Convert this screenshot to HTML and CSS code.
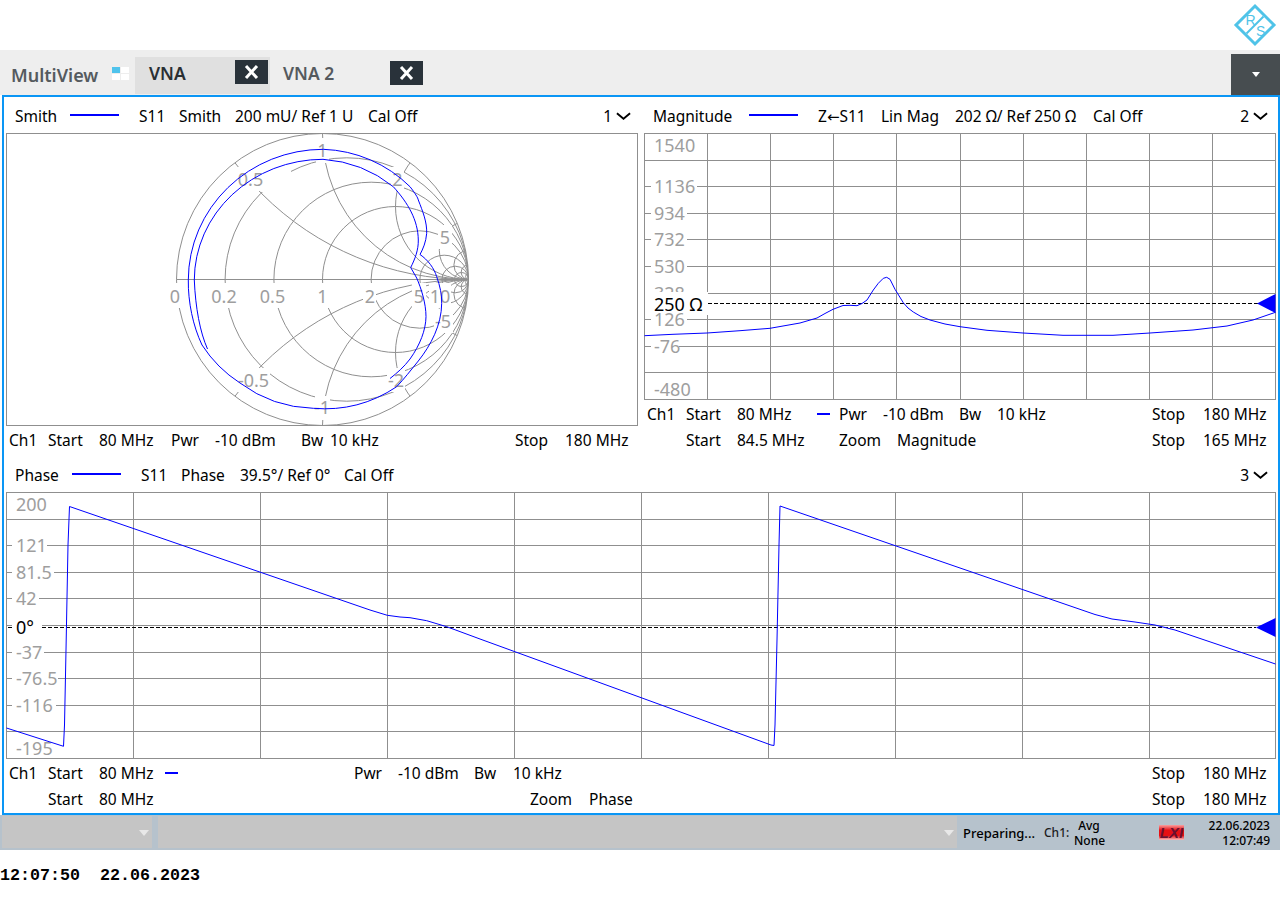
FILE: index.html
```html
<!DOCTYPE html>
<html lang="en">
<head>
    <meta charset="UTF-8">
    <title>VNA MultiView</title>
    <link rel="stylesheet" href="styles.css">
</head>
<body>

    <div class="logo-bar">
        <svg class="logo" viewBox="0 0 46 46" width="46" height="46">
            <path class="logo-line" d="M23 4L42 23L23 42L4 23Z"/>
            <path class="logo-line thin" d="M31.5 14.5L14.5 31.5"/>
            <text class="logo-text" x="13.5" y="23">R</text>
            <text class="logo-text" x="24" y="34">S</text>
        </svg>
    </div>

    <div class="tab-bar">
        <span class="tab-title">MultiView</span>
        <span class="tab-icon"><i class="on"></i><i></i><i></i><i></i></span>
        <div class="tab tab-active">
            <span class="tab-name">VNA</span>
            <button class="tab-close"><svg viewBox="0 0 33 24"><path d="M11 6L22 18M22 6L11 18"/></svg></button>
        </div>
        <div class="tab tab-second">
            <span class="tab-name">VNA 2</span>
            <button class="tab-close"><svg viewBox="0 0 33 24"><path d="M11 6L22 18M22 6L11 18"/></svg></button>
        </div>
        <div class="tab-menu"><span class="tab-menu-arrow"></span></div>
    </div>

    <div class="frame">
        <div class="top-row">

            <!-- Smith chart -->
            <div class="panel panel-left">
                <div class="head head-smith">
                    <span>Smith</span><span class="legend"></span><span>S11</span><span>Smith</span><span>200 mU/ Ref 1 U</span><span>Cal Off</span>
                    <span class="head-num">1<svg class="chevron" viewBox="0 0 16 10"><path d="M1 2L8 8L15 2"/></svg></span>
                </div>
                <svg class="plot" width="632" height="293" viewBox="6 133 632 293">
                    <defs><clipPath id="unit"><circle cx="322.5" cy="279.5" r="146"/></clipPath></defs>
                    <rect class="grid" x="6.5" y="133.5" width="631" height="292"/>
                    <g class="grid" clip-path="url(#unit)">
                        <circle cx="346.8" cy="279.5" r="121.7"/>
                        <circle cx="371.2" cy="279.5" r="97.3"/>
                        <circle cx="395.5" cy="279.5" r="73"/>
                        <circle cx="419.8" cy="279.5" r="48.7"/>
                        <circle cx="444.2" cy="279.5" r="24.3"/>
                        <circle cx="455.2" cy="279.5" r="13.3"/>
                        <circle cx="461.5" cy="279.5" r="7"/>
                        <circle cx="468.5" cy="-12.5" r="292"/>
                        <circle cx="468.5" cy="571.5" r="292"/>
                        <circle cx="468.5" cy="133.5" r="146"/>
                        <circle cx="468.5" cy="425.5" r="146"/>
                        <circle cx="468.5" cy="206.5" r="73"/>
                        <circle cx="468.5" cy="352.5" r="73"/>
                        <circle cx="468.5" cy="250.3" r="29.2"/>
                        <circle cx="468.5" cy="308.7" r="29.2"/>
                        <circle cx="468.5" cy="264.9" r="14.6"/>
                        <circle cx="468.5" cy="294.1" r="14.6"/>
                        <circle cx="468.5" cy="272.2" r="7.3"/>
                        <circle cx="468.5" cy="286.8" r="7.3"/>
                        <circle cx="468.5" cy="276.6" r="2.9"/>
                        <circle cx="468.5" cy="282.4" r="2.9"/>
                    </g>
                    <circle class="grid" cx="322.5" cy="279.5" r="146"/>
                    <path class="grid" d="M176.5 279.5H468.5"/>
                    <g class="mask">
                        <rect x="316" y="138" width="13" height="25"/>
                        <rect x="237" y="167" width="27" height="24"/>
                        <rect x="262" y="166" width="29" height="26"/>
                        <rect x="391" y="167" width="13" height="24"/>
                        <rect x="438" y="225" width="14" height="24"/>
                        <rect x="168" y="283" width="14" height="25"/>
                        <rect x="210" y="283" width="28" height="25"/>
                        <rect x="259" y="283" width="28" height="25"/>
                        <rect x="316" y="283" width="13" height="25"/>
                        <rect x="363" y="283" width="13" height="25"/>
                        <rect x="412" y="283" width="14" height="25"/>
                        <rect x="429" y="283" width="22" height="25"/>
                        <rect x="434" y="309" width="19" height="24"/>
                        <rect x="238" y="368" width="32" height="24"/>
                        <rect x="387" y="368" width="18" height="24"/>
                        <rect x="315" y="396" width="15" height="24"/>
                    </g>
                    <g class="axis-label mid">
                        <text x="322.5" y="156.5">1</text>
                        <text x="250.5" y="185.5">0.5</text>
                        <text x="397.5" y="185.5">2</text>
                        <text x="445" y="243.5">5</text>
                        <text x="175" y="302.5">0</text>
                        <text x="224" y="302.5">0.2</text>
                        <text x="272.5" y="302.5">0.5</text>
                        <text x="322.5" y="302.5">1</text>
                        <text x="370" y="302.5">2</text>
                        <text x="419" y="302.5">5</text>
                        <text x="440" y="302.5">10</text>
                        <text x="443" y="327.5">-5</text>
                        <text x="253.5" y="386.5">-0.5</text>
                        <text x="396" y="386.5">-2</text>
                        <text x="322" y="414">-1</text>
                    </g>
                    <path class="trace" d="M207.5 349C200 332 195.5 308 194.3 280A129 121 0 0 1 323 159.3A122 116 0 0 1 393.3 186.7C408 203 418 220 418.3 240C418.5 250 415 259 410.7 267.5L416.7 278C421 288 426 303 426 316.7C425.8 330 420 345 410 359C404 367 397 373 390 378.5"/>
                    <path class="trace" d="M420 254.5C428 260 434 268 436.7 276.7C440 286 442 295 441.7 303.3C441.5 325 431 345 418.3 361C411 370 404 379 396.7 386.7A130 130 0 0 1 313.3 408.3A128 128 0 0 1 240 383A128 128 0 0 1 202 345C193 326 188 302 188.3 280A135 131 0 0 1 323.3 149.3A128 125 0 0 1 410 186.7C415 193 418 198 418.3 200C423 212 427 222 426.7 233.3C426 242 423 249 420 254.5Z"/>
                </svg>
                <div class="info info-a">
                    <span>Ch1</span><span>Start</span><span>80 MHz</span><span>Pwr</span><span>-10 dBm</span><span>Bw</span><span>10 kHz</span><span>Stop</span><span>180 MHz</span>
                </div>
            </div>

            <!-- Magnitude -->
            <div class="panel panel-right">
                <div class="head head-mag">
                    <span>Magnitude</span><span class="legend"></span><span>Z<i class="arrow">←</i>S11</span><span>Lin Mag</span><span>202 Ω/ Ref 250 Ω</span><span>Cal Off</span>
                    <span class="head-num">2<svg class="chevron" viewBox="0 0 16 10"><path d="M1 2L8 8L15 2"/></svg></span>
                </div>
                <svg class="plot" width="632" height="267" viewBox="644 133 632 267">
                    <rect class="grid" x="644.5" y="133.5" width="631" height="266"/>
                    <path class="grid" d="M707.5 133V400M770.5 133V400M833.5 133V400M896.5 133V400M960.5 133V400M1023.5 133V400M1086.5 133V400M1149.5 133V400M1212.5 133V400M644 160.5H1276M644 186.5H1276M644 213.5H1276M644 239.5H1276M644 266.5H1276M644 293.5H1276M644 319.5H1276M644 346.5H1276M644 372.5H1276"/>
                    <g class="mask">
                        <rect x="651" y="135" width="46" height="22"/>
                        <rect x="651" y="176" width="46" height="22"/>
                        <rect x="651" y="203" width="36" height="22"/>
                        <rect x="651" y="229" width="36" height="22"/>
                        <rect x="651" y="256" width="36" height="22"/>
                        <rect x="651" y="309" width="36" height="21"/>
                        <rect x="651" y="336" width="28" height="22"/>
                        <rect x="651" y="378" width="44" height="20"/>
                    </g>
                    <g class="axis-label">
                        <text x="654" y="152">1540</text>
                        <text x="654" y="193">1136</text>
                        <text x="654" y="220">934</text>
                        <text x="654" y="246">732</text>
                        <text x="654" y="273">530</text>
                        <text x="654" y="300">328</text>
                    </g>
                    <rect class="mask" x="645" y="292" width="63" height="23"/>
                    <g class="axis-label">
                        <text x="654" y="326">126</text>
                        <text x="654" y="353">-76</text>
                        <text x="654" y="395.5">-480</text>
                    </g>
                    <text class="axis-ref" x="654" y="311">250 Ω</text>
                    <path class="dash" d="M708 303.5H1258"/>
                    <path class="trace" d="M644.5 335.7L673 334.3L707 333L740 330.7L770 328.3L800 323L817 318L825 313.5L833 309.3L843 305.5L850 305.3L857 305.7L862 303.5L867 300L873.3 290L878.3 283.3L883.3 278.3L886.7 277.3L890 279.3L895 289.3L903.3 302.7L908 308L913.3 312L921 316.5L930 320L945 324L960 326.7L987 330.3L1023 333L1063 335.3L1113 335.3L1150 333L1193 330L1227 326L1253 320L1275.5 312.3"/>
                    <path class="marker" d="M1257 303.5L1275.5 294V313Z"/>
                </svg>
                <div class="info info-b">
                    <span>Ch1</span><span>Start</span><span>80 MHz</span><span class="dash-cell"><i class="legend-short"></i></span><span>Pwr</span><span>-10 dBm</span><span>Bw</span><span>10 kHz</span><span>Stop</span><span>180 MHz</span>
                </div>
                <div class="info info-b2">
                    <span></span><span>Start</span><span>84.5 MHz</span><span>Zoom</span><span>Magnitude</span><span>Stop</span><span>165 MHz</span>
                </div>
            </div>
        </div>

        <!-- Phase -->
        <div class="panel panel-bottom">
            <div class="head head-phase">
                <span>Phase</span><span class="legend"></span><span>S11</span><span>Phase</span><span>39.5°/ Ref 0°</span><span>Cal Off</span>
                <span class="head-num">3<svg class="chevron" viewBox="0 0 16 10"><path d="M1 2L8 8L15 2"/></svg></span>
            </div>
            <svg class="plot" width="1270" height="267" viewBox="6 492 1270 267">
                <rect class="grid" x="6.5" y="492.5" width="1269" height="266"/>
                <path class="grid" d="M133.5 492V759M260.5 492V759M387.5 492V759M514.5 492V759M641.5 492V759M768.5 492V759M895.5 492V759M1022.5 492V759M1149.5 492V759M6 519.5H1276M6 545.5H1276M6 572.5H1276M6 598.5H1276M6 625.5H1276M6 652.5H1276M6 678.5H1276M6 705.5H1276M6 731.5H1276"/>
                <g class="mask">
                    <rect x="13" y="494" width="38" height="21"/>
                    <rect x="12" y="535" width="35" height="21"/>
                    <rect x="12" y="562" width="42" height="21"/>
                    <rect x="12" y="588" width="27" height="21"/>
                    <rect x="12" y="615" width="30" height="23"/>
                    <rect x="12" y="642" width="32" height="21"/>
                    <rect x="12" y="668" width="46" height="21"/>
                    <rect x="12" y="695" width="44" height="21"/>
                    <rect x="13" y="736" width="42" height="21"/>
                </g>
                <g class="axis-label">
                    <text x="16" y="511">200</text>
                    <text x="16" y="552">121</text>
                    <text x="16" y="579">81.5</text>
                    <text x="16" y="605">42</text>
                    <text x="16" y="659">-37</text>
                    <text x="16" y="685">-76.5</text>
                    <text x="16" y="712">-116</text>
                    <text x="16" y="755">-195</text>
                </g>
                <text class="axis-ref" x="16" y="634">0°</text>
                <path class="dash" d="M8 627.5H14M42 627.5H1256"/>
                <path class="trace" d="M6.5 728L63.5 746.3L64.5 725L66 650L68 545L69.5 506.5L370 610L387.3 615.3L400 617L410 617.7L426.7 620.7L446.7 626.7L480 639L771 745L774 745.5L775 725L777 640L779 545L780 506L1095 614.5L1112 619L1135 622L1155 625L1175 630L1275.5 664"/>
                <path class="marker" d="M1256 627.5L1275.5 618V637Z"/>
            </svg>
            <div class="info info-c">
                <span>Ch1</span><span>Start</span><span>80 MHz</span><span class="dash-cell"><i class="legend-short"></i></span><span>Pwr</span><span>-10 dBm</span><span>Bw</span><span>10 kHz</span><span>Stop</span><span>180 MHz</span>
            </div>
            <div class="info info-c2">
                <span></span><span>Start</span><span>80 MHz</span><span>Zoom</span><span>Phase</span><span>Stop</span><span>180 MHz</span>
            </div>
        </div>
    </div>

    <div class="status-bar">
        <div class="status-seg seg-small"><span class="seg-arrow"></span></div>
        <div class="status-seg seg-big"><span class="seg-arrow"></span></div>
        <span class="status-msg">Preparing...</span>
        <span class="status-ch">Ch1:</span>
        <span class="status-avg">Avg<br>None</span>
        <span class="lxi">LXI</span>
        <span class="status-time">22.06.2023<br>12:07:49</span>
    </div>

    <p class="stamp">12:07:50&nbsp;&nbsp;22.06.2023</p>

</body>
</html>
```

FILE: styles.css
```css
body {
    margin: 0;
    width: 1280px;
    height: 900px;
    overflow: hidden;
    background-color: #ffffff;
    font-family: "Noto Sans", Arial, sans-serif;
    color: #000000;
}

/* logo */
.logo-bar {
    height: 50px;
    display: flex;
    justify-content: flex-end;
    align-items: center;
    padding-right: 2px;
}
.logo-line {
    fill: none;
    stroke: #4fc3e8;
    stroke-width: 3;
}
.logo-line.thin {
    stroke-width: 2;
}
.logo-text {
    font-family: "Liberation Sans", sans-serif;
    font-size: 14px;
    fill: #4fc3e8;
}

/* tabs */
.tab-bar {
    height: 45px;
    background-color: #eeeeee;
    display: flex;
}
.tab-title {
    margin: 15px 0 0 11px;
    width: 101px;
    font-size: 18px;
    font-weight: 600;
    color: #555a5e;
    line-height: 21px;
}
.tab-icon {
    display: grid;
    grid-template-columns: 8px 8px;
    grid-template-rows: 6px 6px;
    gap: 1px;
    width: 17px;
    height: 13px;
    margin: 17px 6px 0 0;
}
.tab-icon i {
    background-color: #ffffff;
}
.tab-icon i.on {
    background-color: #4fc3ec;
}
.tab {
    display: flex;
    align-items: flex-start;
}
.tab-active {
    width: 135px;
    height: 37px;
    margin-top: 7px;
    background-color: #e0e0e0;
    position: relative;
}
.tab-active .tab-name {
    margin: 5px 0 0 14px;
    color: #2a2f33;
}
.tab-active .tab-close {
    position: absolute;
    left: 100px;
    top: 3px;
}
.tab-second {
    margin-left: 13px;
    width: 140px;
    padding-top: 11px;
}
.tab-second .tab-name {
    color: #555a5e;
    width: 107px;
    margin-top: 1px;
}
.tab-name {
    font-size: 17.5px;
    font-weight: 600;
    line-height: 23px;
}
.tab-close {
    width: 33px;
    height: 24px;
    padding: 0;
    border: none;
    background-color: #29323a;
}
.tab-close svg {
    display: block;
    width: 33px;
    height: 24px;
}
.tab-close path {
    fill: none;
    stroke: #ffffff;
    stroke-width: 3;
}
.tab-menu {
    margin-left: auto;
    margin-top: 4px;
    width: 49px;
    height: 41px;
    background-color: #474d50;
    display: flex;
    justify-content: center;
    align-items: center;
}
.tab-menu-arrow {
    width: 0;
    height: 0;
    border-left: 4px solid transparent;
    border-right: 4px solid transparent;
    border-top: 5px solid #ffffff;
}

/* measurement frame */
.frame {
    height: 716px;
    margin-left: 2px;
    border: 2px solid #0a96f5;
}
.top-row {
    display: flex;
}
.panel-left {
    width: 636px;
    padding-left: 2px;
    box-sizing: border-box;
}
.panel-right {
    width: 638px;
    padding-left: 4px;
    box-sizing: border-box;
}
.panel-bottom {
    padding-left: 2px;
}
.plot {
    display: block;
}

.head {
    height: 36px;
    display: flex;
    align-items: center;
    font-size: 15.5px;
    line-height: 20px;
    padding-top: 2px;
    box-sizing: border-box;
}
.head-smith {
    padding-left: 9px;
    width: 625px;
}
.head-mag {
    padding-left: 9px;
    width: 624px;
}
.head-phase {
    height: 39px;
    padding-top: 5px;
    padding-left: 9px;
    width: 1262px;
}
.arrow {
    font-family: "DejaVu Sans", sans-serif;
    font-style: normal;
    font-size: 15px;
}
.legend {
    width: 49px;
    height: 2px;
    margin-top: -2px;
    background-color: #0000ff;
}
.head-smith span:nth-child(1) { width: 55px; }
.head-smith span:nth-child(2) { margin-right: 20px; }
.head-smith span:nth-child(3) { width: 40px; }
.head-smith span:nth-child(4) { width: 56px; }
.head-smith span:nth-child(5) { width: 133px; }

.head-mag span:nth-child(1) { width: 96px; }
.head-mag span:nth-child(2) { margin-right: 20px; }
.head-mag span:nth-child(3) { width: 63px; }
.head-mag span:nth-child(4) { width: 74px; }
.head-mag span:nth-child(5) { width: 138px; }

.head-phase span:nth-child(1) { width: 57px; }
.head-phase span:nth-child(2) { margin-right: 20px; }
.head-phase span:nth-child(3) { width: 40px; }
.head-phase span:nth-child(4) { width: 59px; }
.head-phase span:nth-child(5) { width: 104px; }

.head-num {
    margin-left: auto;
    display: flex;
    align-items: center;
}
.chevron {
    width: 15px;
    height: 10px;
    margin-left: 4px;
}
.chevron path {
    fill: none;
    stroke: #000000;
    stroke-width: 2;
}

/* plots */
.grid {
    fill: none;
    stroke: #8f8f8f;
    stroke-width: 1;
}
.mask,
.mask rect {
    fill: #ffffff;
    stroke: none;
}
.axis-label text {
    font-size: 18px;
    fill: #9e9e9e;
}
.axis-label.mid text {
    text-anchor: middle;
}
.axis-ref {
    font-size: 18px;
    fill: #000000;
}
.dash {
    fill: none;
    stroke: #000000;
    stroke-width: 1;
    stroke-dasharray: 4 2;
}
.trace {
    fill: none;
    stroke: #0000ff;
    stroke-width: 1;
}
.marker {
    fill: #0000ff;
}

/* info rows under the plots */
.info {
    display: grid;
    height: 26px;
    align-items: center;
    font-size: 15.5px;
    line-height: 20px;
}
.info-a {
    padding-left: 3px;
    padding-top: 1px;
    height: 25px;
    grid-template-columns: 39px 51px 72px 44px 86px 29px 185px 50px 1fr;
}
.info-b {
    margin-top: 1px;
    padding-left: 3px;
    height: 25px;
    grid-template-columns: 39px 51px 80px 22px 44px 76px 38px 155px 51px 1fr;
}
.info-b2 {
    margin-top: 1px;
    padding-left: 3px;
    grid-template-columns: 39px 51px 102px 58px 255px 51px 1fr;
}
.info-c {
    margin-top: 1px;
    padding-left: 3px;
    grid-template-columns: 39px 51px 66px 189px 44px 76px 39px 639px 51px 1fr;
}
.info-c2 {
    padding-left: 3px;
    grid-template-columns: 39px 51px 431px 59px 563px 51px 1fr;
}
.legend-short {
    display: block;
    width: 13px;
    height: 2px;
    background-color: #0000ff;
}

/* status bar */
.status-bar {
    height: 35px;
    background-color: #b6c2cc;
    display: flex;
    align-items: center;
    font-size: 13px;
}
.status-seg {
    height: 32px;
    margin-top: -2px;
    background-color: #c5c5c5;
    display: flex;
    justify-content: flex-end;
    align-items: center;
}
.seg-small {
    width: 150px;
    margin-left: 2px;
    margin-right: 6px;
}
.seg-big {
    width: 799px;
}
.seg-arrow {
    width: 0;
    height: 0;
    margin-right: 3px;
    margin-top: 2px;
    border-left: 5px solid transparent;
    border-right: 5px solid transparent;
    border-top: 6px solid #e8e8e8;
}
.status-msg {
    margin-left: 6px;
    width: 81px;
    font-weight: 500;
}
.status-ch {
    width: 30px;
    font-size: 12px;
    font-weight: 500;
    color: #1c1c1c;
}
.status-avg {
    width: 30px;
    text-align: center;
    font-size: 12px;
    line-height: 15px;
    font-weight: 500;
}
.lxi {
    margin-left: 55px;
    width: 25px;
    height: 15px;
    background: linear-gradient(#f9a0a0, #e60f14 35%, #e60f14 70%, #f9c0c0);
    color: #6a1030;
    font-family: "Liberation Sans", sans-serif;
    font-size: 15px;
    font-weight: bold;
    font-style: italic;
    line-height: 15px;
    text-align: center;
}
.status-time {
    margin-left: auto;
    margin-right: 10px;
    text-align: right;
    font-size: 12px;
    line-height: 15px;
    font-weight: 500;
}

.stamp {
    margin: 16px 0 0 0;
    font-family: "Liberation Mono", monospace;
    font-size: 16.67px;
    font-weight: bold;
    line-height: 20px;
}
```
